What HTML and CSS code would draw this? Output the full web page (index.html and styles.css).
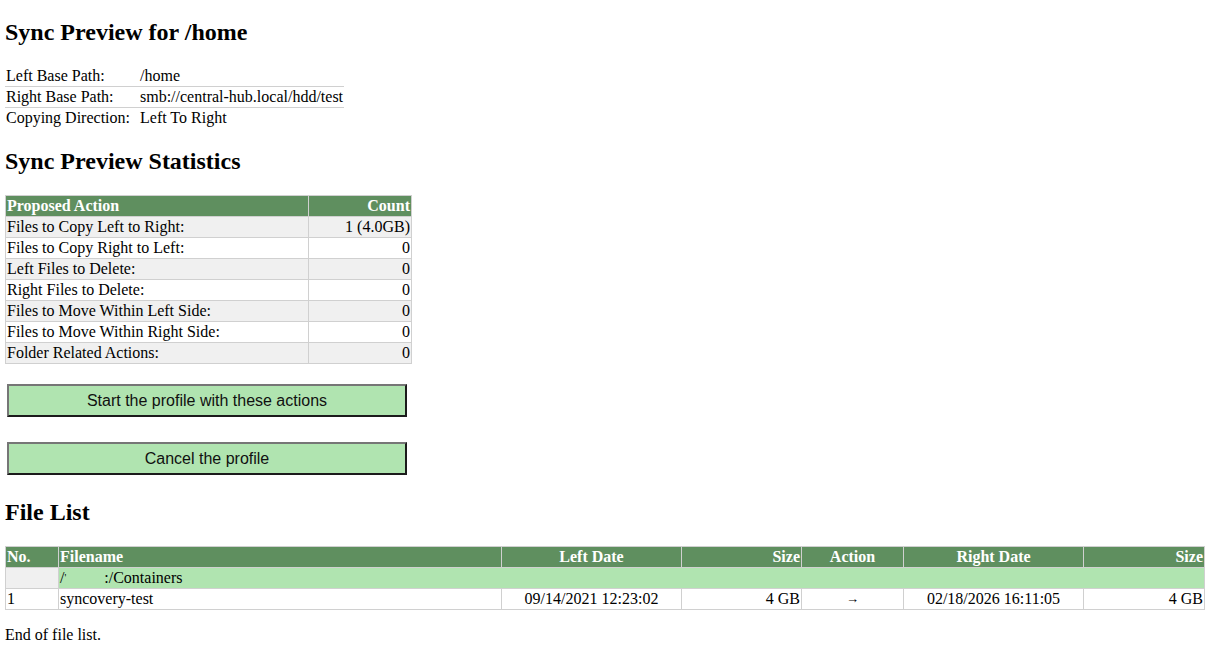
FILE: index.html
```html
<!DOCTYPE html>
<html lang="en">
<head>
  <meta charset="UTF-8" />
  <title>Sync Preview for /home</title>
  <link rel="stylesheet" href="styles.css">
</head>
<body>
  <h2 class="first">Sync Preview for /home</h2>

  <table class="info">
    <tr><td class="label">Left Base Path:</td><td>/home</td></tr>
    <tr><td class="label">Right Base Path:</td><td>smb://central-hub.local/hdd/test</td></tr>
    <tr><td class="label">Copying Direction:</td><td>Left To Right</td></tr>
  </table>

  <h2>Sync Preview Statistics</h2>

  <table class="grid stats">
    <tr><th class="left action-col">Proposed Action</th><th class="right count-col">Count</th></tr>
    <tr class="odd"><td>Files to Copy Left to Right:</td><td class="right">1 (4.0GB)</td></tr>
    <tr><td>Files to Copy Right to Left:</td><td class="right">0</td></tr>
    <tr class="odd"><td>Left Files to Delete:</td><td class="right">0</td></tr>
    <tr><td>Right Files to Delete:</td><td class="right">0</td></tr>
    <tr class="odd"><td>Files to Move Within Left Side:</td><td class="right">0</td></tr>
    <tr><td>Files to Move Within Right Side:</td><td class="right">0</td></tr>
    <tr class="odd"><td>Folder Related Actions:</td><td class="right">0</td></tr>
  </table>

  <div class="buttons">
    <button class="btn">Start the profile with these actions</button>
    <button class="btn">Cancel the profile</button>
  </div>

  <h2>File List</h2>

  <table class="grid files">
    <tr>
      <th class="left c-no">No.</th>
      <th class="left">Filename</th>
      <th class="c-date">Left Date</th>
      <th class="right c-size">Size</th>
      <th class="c-action">Action</th>
      <th class="c-date">Right Date</th>
      <th class="right c-size2">Size</th>
    </tr>
    <tr class="folder">
      <td class="blank"></td>
      <td colspan="6">/<span class="tick">'</span><span class="hidden"></span>:/Containers</td>
    </tr>
    <tr>
      <td>1</td>
      <td>syncovery-test</td>
      <td class="center">09/14/2021 12:23:02</td>
      <td class="right">4 GB</td>
      <td class="center arrow">&rarr;</td>
      <td class="center">02/18/2026 16:11:05</td>
      <td class="right">4 GB</td>
    </tr>
  </table>

  <p>End of file list.</p>
</body>
</html>
```

FILE: styles.css
```css
body {
  margin: 5px;
  font-family: "Liberation Serif", "Times New Roman", serif;
  font-size: 16px;
  color: #000;
  background: #fff;
}

h2 {
  font-size: 24px;
  font-weight: bold;
  margin: 20px 0;
}

h2.first {
  margin-top: 14px;
}

table {
  border-collapse: collapse;
}

td, th {
  padding: 1px;
  line-height: 18px;
}

/* info block */
.info td {
  border-bottom: 1px solid #d0d0d0;
}
.info tr:last-child td {
  border-bottom: none;
}
.info .label {
  width: 132px;
}

/* green tables */
.grid th, .grid td {
  border: 1px solid #d0d0d0;
}

.grid th {
  background: #5f8f5f;
  color: #fff;
  font-weight: bold;
  text-align: center;
}

.grid tr.odd td {
  background: #f0f0f0;
}

.grid .left { text-align: left; }
.grid .right { text-align: right; }
.grid .center { text-align: center; }

.stats .action-col { width: 300px; }
.stats .count-col { width: 100px; }

.files {
  width: 1200px;
}
.files .c-no { width: 50px; }
.files .c-date { width: 177px; }
.files .c-size { width: 117px; }
.files .c-action { width: 99px; }
.files .c-size2 { width: 118px; }

.folder td {
  background: #b0e4b0;
}
.folder td.blank {
  background: #f0f0f0;
}
.folder .tick {
  font-size: 10px;
  vertical-align: top;
}
.folder .hidden {
  display: inline-block;
  width: 38px;
}

.arrow {
  font-size: 13px;
}

/* buttons */
.buttons {
  display: flex;
  flex-direction: column;
  align-items: flex-start;
  gap: 25px;
  margin: 20px 0 24px 2px;
}

.btn {
  width: 400px;
  height: 33px;
  font-family: "Liberation Sans", Arial, sans-serif;
  font-size: 16px;
  color: #111;
  background: #b0e4b0;
  border: 2px solid;
  border-color: #767676 #1b1b1b #1b1b1b #767676;
  padding: 0;
  cursor: pointer;
}

p {
  margin: 16px 0;
}
```
